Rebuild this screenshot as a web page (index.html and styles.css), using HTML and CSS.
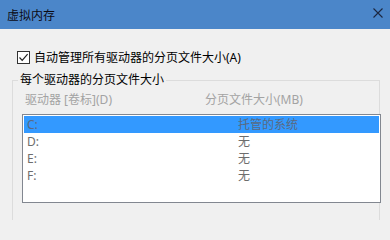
FILE: index.html
```html
<!DOCTYPE html>
<html lang="zh-CN">
<head>
<meta charset="utf-8">
<title>虚拟内存</title>
<link rel="stylesheet" href="styles.css">
</head>
<body>
<div class="window">
  <div class="titlebar">
    <span class="title">虚拟内存</span>
    <svg class="close" width="10" height="10" viewBox="0 0 10 10" aria-hidden="true">
      <path d="M0.5 0.5 L9.5 9.5 M9.5 0.5 L0.5 9.5" stroke="#1c2740" stroke-width="1.1" fill="none"/>
    </svg>
  </div>
  <div class="body">
    <label class="check-row">
      <span class="checkbox">
        <svg width="11" height="11" viewBox="0 0 11 11" aria-hidden="true">
          <path d="M1.5 5.5 L4.2 8.3 L9.6 2.2" stroke="#222" stroke-width="1.2" fill="none"/>
        </svg>
      </span>
      <span class="check-label">自动管理所有驱动器的分页文件大小(A)</span>
    </label>
    <fieldset class="group">
      <legend class="group-title">每个驱动器的分页文件大小</legend>
      <div class="headers">
        <span class="col-drive">驱动器 [卷标](D)</span>
        <span class="col-size">分页文件大小(MB)</span>
      </div>
      <div class="listbox">
        <div class="row selected"><span class="cell-drive">C:</span><span class="cell-size">托管的系统</span></div>
        <div class="row"><span class="cell-drive">D:</span><span class="cell-size">无</span></div>
        <div class="row"><span class="cell-drive">E:</span><span class="cell-size">无</span></div>
        <div class="row"><span class="cell-drive">F:</span><span class="cell-size">无</span></div>
      </div>
    </fieldset>
  </div>
</div>
</body>
</html>
```
FILE: styles.css
```css
html, body {
  margin: 0;
  padding: 0;
  background: #f0f0f0;
  overflow: hidden;
}
.window {
  width: 390px;
  height: 220px;
  overflow: hidden;
  font-family: "Noto Sans", "Noto Sans CJK SC", sans-serif;
  font-size: 12px;
  color: #000;
}
.titlebar {
  height: 29px;
  background: #4b86c9;
  display: flex;
  justify-content: space-between;
  align-items: flex-start;
  padding: 0 7px 0 7px;
}
.title {
  line-height: 14px;
  margin-top: 9px;
  color: #0b0b14;
}
.close {
  margin-top: 8px;
  display: block;
}
.body {
  padding: 22px 0 0 0;
}
.check-row {
  display: flex;
  align-items: center;
  height: 13px;
  margin-left: 17px;
}
.checkbox {
  width: 11px;
  height: 11px;
  border: 1px solid #333;
  background: #fff;
  display: flex;
}
.check-label {
  margin-left: 4px;
  line-height: 13px;
}
.group {
  margin: 9px 0 0 12px;
  width: 368px;
  box-sizing: border-box;
  border: 1px solid #dcdcdc;
  padding: 6px 0 40px 9px;
  min-inline-size: 0;
}
.group-title {
  padding: 0 2px;
  margin-left: -4px;
  line-height: 14px;
}
.headers {
  display: flex;
  color: #a3a3a3;
  line-height: 14px;
  padding-left: 3px;
}
.col-drive {
  width: 180px;
}
.listbox {
  margin-top: 7px;
  width: 359px;
  height: 89px;
  box-sizing: border-box;
  border: 1px solid #828790;
  background: #fff;
  padding: 1px;
}
.row {
  display: flex;
  height: 17px;
  line-height: 17px;
  padding-left: 3px;
  color: #6d6d6d;
}
.row.selected {
  background: #3399ff;
  color: #5a6a82;
}
.cell-drive {
  width: 211px;
}
```
